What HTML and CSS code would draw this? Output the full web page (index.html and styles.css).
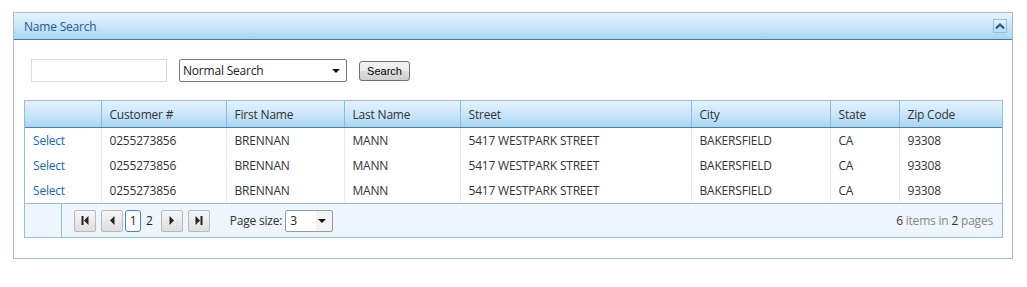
FILE: index.html
```html
<!DOCTYPE html>
<html lang="en">
<head>
    <meta charset="UTF-8">
    <title>Name Search</title>
    <link rel="stylesheet" href="styles.css">
</head>
<body>
    <div class="panel">
        <div class="panel-header">
            <span class="panel-title">Name Search</span>
            <span class="collapse-btn">
                <svg width="10" height="6" viewBox="0 0 10 6"><path d="M1 5.5 L5 1.5 L9 5.5" fill="none" stroke="#1d5a96" stroke-width="2.2"/></svg>
            </span>
        </div>
        <div class="panel-body">
            <div class="search-row">
                <input type="text" class="search-input">
                <div class="combo">
                    <span class="combo-text">Normal Search</span>
                    <span class="combo-arrow"></span>
                </div>
                <button class="search-btn">Search</button>
            </div>

            <div class="grid">
                <table>
                    <colgroup>
                        <col style="width:76px">
                        <col style="width:125px">
                        <col style="width:118px">
                        <col style="width:116px">
                        <col style="width:231px">
                        <col style="width:139px">
                        <col style="width:69px">
                        <col>
                    </colgroup>
                    <thead>
                        <tr>
                            <th></th>
                            <th>Customer #</th>
                            <th>First Name</th>
                            <th>Last Name</th>
                            <th>Street</th>
                            <th>City</th>
                            <th>State</th>
                            <th>Zip Code</th>
                        </tr>
                    </thead>
                    <tbody>
                        <tr>
                            <td><a href="#">Select</a></td>
                            <td>0255273856</td>
                            <td>BRENNAN</td>
                            <td>MANN</td>
                            <td>5417 WESTPARK STREET</td>
                            <td>BAKERSFIELD</td>
                            <td>CA</td>
                            <td>93308</td>
                        </tr>
                        <tr>
                            <td><a href="#">Select</a></td>
                            <td>0255273856</td>
                            <td>BRENNAN</td>
                            <td>MANN</td>
                            <td>5417 WESTPARK STREET</td>
                            <td>BAKERSFIELD</td>
                            <td>CA</td>
                            <td>93308</td>
                        </tr>
                        <tr>
                            <td><a href="#">Select</a></td>
                            <td>0255273856</td>
                            <td>BRENNAN</td>
                            <td>MANN</td>
                            <td>5417 WESTPARK STREET</td>
                            <td>BAKERSFIELD</td>
                            <td>CA</td>
                            <td>93308</td>
                        </tr>
                    </tbody>
                </table>
                <div class="pager">
                    <div class="pager-spacer"></div>
                    <div class="pager-main">
                        <div class="pager-nav">
                            <span class="pbtn"><svg width="8" height="9" viewBox="0 0 8 9"><rect x="0.5" y="0" width="2" height="9" fill="#222"/><path d="M7.5 0 L3 4.5 L7.5 9 Z" fill="#222"/></svg></span>
                            <span class="pbtn prev"><svg width="5" height="9" viewBox="0 0 5 9"><path d="M4.5 0 L0 4.5 L4.5 9 Z" fill="#222"/></svg></span>
                            <span class="page current">1</span>
                            <span class="page">2</span>
                            <span class="pbtn next"><svg width="5" height="9" viewBox="0 0 5 9"><path d="M0.5 0 L5 4.5 L0.5 9 Z" fill="#222"/></svg></span>
                            <span class="pbtn"><svg width="8" height="9" viewBox="0 0 8 9"><path d="M0.5 0 L5 4.5 L0.5 9 Z" fill="#222"/><rect x="5.5" y="0" width="2" height="9" fill="#222"/></svg></span>
                        </div>
                        <div class="page-size">
                            <span class="page-size-label">Page size:</span>
                            <div class="size-combo">
                                <span class="size-text">3</span>
                                <span class="size-arrow"></span>
                            </div>
                        </div>
                        <div class="pager-info"><b>6</b> items in <b>2</b> pages</div>
                    </div>
                </div>
            </div>
        </div>
    </div>
</body>
</html>
```

FILE: styles.css
```css
body {
    margin: 0;
    padding: 12px 15px 0 13px;
    font-family: "Open Sans", "Noto Sans", sans-serif;
    font-size: 12px;
    letter-spacing: -0.2px;
    color: #333;
    background: #fff;
}
.panel {
    width: 998px;
    border: 1px solid #a3bccc;
}
.panel-header {
    display: flex;
    align-items: center;
    justify-content: space-between;
    height: 26px;
    padding: 0 5px 0 10px;
    background: linear-gradient(to bottom, #e6f3fc 0%, #d2eafa 35%, #a9d6f3 100%);
    border-bottom: 1px solid #3b7cb5;
}
.panel-title {
    color: #1a5e9a;
    font-size: 12px;
}
.collapse-btn {
    display: flex;
    align-items: center;
    justify-content: center;
    width: 12px;
    height: 12px;
    border: 1px solid #8cc2e6;
    background: linear-gradient(to bottom, #e4f2fc, #b8ddf5);
}
.panel-body {
    padding: 19px 9px 20px 10px;
}
.search-row {
    display: flex;
    align-items: center;
    gap: 12px;
    padding-left: 7px;
    margin-bottom: 18px;
}
.search-input {
    box-sizing: border-box;
    width: 136px;
    height: 23px;
    margin: 0;
    border: 1px solid #dadada;
    background: #fff;
}
.combo {
    box-sizing: border-box;
    display: flex;
    align-items: center;
    justify-content: space-between;
    width: 168px;
    height: 23px;
    border: 1px solid #7a7a7a;
    border-radius: 2px;
    padding: 0 6px 0 3px;
    background: #fff;
}
.combo-text {
    color: #222;
}
.combo-arrow,
.size-arrow {
    width: 0;
    height: 0;
    border-left: 4px solid transparent;
    border-right: 4px solid transparent;
    border-top: 4px solid #111;
}
.search-btn {
    box-sizing: border-box;
    width: 51px;
    height: 20px;
    margin: 0;
    padding: 0;
    border: 1px solid #707070;
    border-radius: 3px;
    background: linear-gradient(to bottom, #f3f3f3 0%, #ebebeb 50%, #dddddd 51%, #cfcfcf 100%);
    font-family: "Liberation Sans", Arial, sans-serif;
    font-size: 11px;
    letter-spacing: 0;
    color: #000;
}
.grid {
    border: 1px solid #9bbcd7;
}
.grid table {
    width: 100%;
    border-collapse: collapse;
    table-layout: fixed;
}
.grid th {
    height: 26px;
    padding: 0 0 0 8px;
    text-align: left;
    font-weight: normal;
    color: #333;
    background: linear-gradient(to bottom, #e3f2fc 0%, #d0e9fa 40%, #abd7f4 100%);
    border-left: 1px solid #88bde2;
    border-bottom: 1px solid #3e82bb;
}
.grid th:first-child {
    border-left: none;
}
.grid td {
    height: 25px;
    padding: 0 0 0 8px;
    color: #333;
    border-left: 1px solid #ececec;
    white-space: nowrap;
}
.grid td:first-child {
    border-left: none;
}
.grid td a {
    color: #1467c9;
    text-decoration: none;
}
.pager {
    display: flex;
    height: 33px;
    background: #eef5fc;
    border-top: 1px solid #9bbcd7;
}
.pager-spacer {
    width: 36px;
    border-right: 1px solid #9bbcd7;
}
.pager-main {
    flex: 1;
    display: flex;
    align-items: center;
    padding: 0 9px 0 12px;
}
.pager-nav {
    display: flex;
    align-items: center;
}
.pbtn {
    box-sizing: border-box;
    display: flex;
    align-items: center;
    justify-content: center;
    width: 22px;
    height: 22px;
    border: 1px solid #b9b9b9;
    border-radius: 2px;
    background: linear-gradient(to bottom, #f6f6f6, #dedede);
    margin-right: 5px;
}
.pbtn.prev {
    margin-right: 2px;
}
.pbtn.next {
    margin-left: 5px;
}
.page {
    box-sizing: border-box;
    display: flex;
    align-items: center;
    justify-content: center;
    height: 22px;
    padding: 0 3px;
    color: #222;
    font-size: 12px;
}
.page.current {
    width: 16px;
    border: 1px solid #3a86d6;
    border-radius: 3px;
    background: #fff;
    margin-right: 2px;
}
.page-size {
    display: flex;
    align-items: center;
    gap: 3px;
    margin-left: 15px;
}
.page-size-label {
    color: #333;
}
.size-combo {
    box-sizing: border-box;
    display: flex;
    align-items: center;
    justify-content: space-between;
    width: 48px;
    height: 22px;
    border: 1px solid #9a9a9a;
    border-radius: 2px;
    padding: 0 6px 0 4px;
    background: linear-gradient(to right, #fff 0, #fff 30px, #f4f4f4 30px);
}
.size-text {
    color: #222;
}
.pager-info {
    margin-left: auto;
    color: #888;
}
.pager-info b {
    font-weight: normal;
    color: #333;
}
```
